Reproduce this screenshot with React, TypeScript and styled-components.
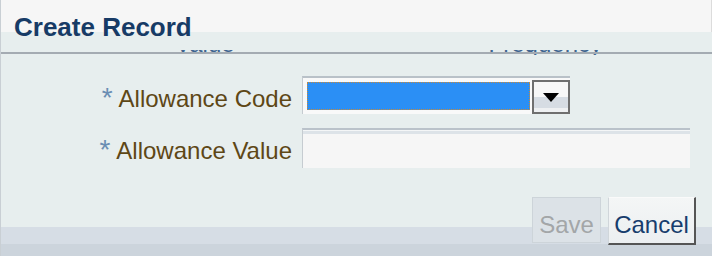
import React from 'react';
import styled, { createGlobalStyle } from 'styled-components';

const GlobalStyle = createGlobalStyle`
  body {
    margin: 0;
    font-family: 'Liberation Sans', Arial, sans-serif;
  }
`;

const Dialog = styled.div`
  width: 712px;
  height: 256px;
  box-sizing: border-box;
  display: flex;
  flex-direction: column;
  background: #e7eeee;
  border-left: 1px solid #c9cfd4;
  overflow: hidden;
`;

const Header = styled.div`
  height: 32px;
  box-sizing: border-box;
  padding: 14px 0 0 13px;
  background: #f6f6f6;
  border-right: 1px solid #dcdcdc;
`;

const Title = styled.h3`
  margin: 0;
  font-size: 26px;
  line-height: 26px;
  font-weight: bold;
  color: #173b66;
  white-space: nowrap;
`;

// the column headings of the table behind the dialog peek out round the rule
const Divider = styled.div`
  flex: none;
  margin-top: 18px;
  height: 5px;
  overflow: hidden;
  display: flex;
  flex-direction: column;
`;

const Rule = styled.div`
  flex: none;
  margin-top: -4px;
  height: 2px;
  background: #a4abb2;
`;

const HiddenHeadings = styled.div`
  flex: none;
  display: flex;
  gap: 254px;
  margin-top: -18px;
  padding-left: 174px;
  font-size: 24px;
  line-height: 24px;
  color: #3f6590;
  white-space: nowrap;
`;

const Form = styled.div`
  margin-top: 21px;
  display: grid;
  grid-template-columns: 291px auto;
  column-gap: 10px;
  row-gap: 14px;
  align-items: start;
`;

const Label = styled.label`
  padding-top: 11px;
  font-size: 24px;
  line-height: 24px;
  color: #5e4716;
  text-align: right;
  white-space: nowrap;
`;

const Star = styled.span`
  font-size: 28px;
  line-height: 0;
  color: #6a8db3;
  margin-right: 6px;
`;

const Select = styled.div`
  width: 268px;
  height: 38px;
  box-sizing: border-box;
  display: flex;
  background: #f9f9f9;
  border-top: 2px solid #b9c1c8;
  border-left: 1px solid #c5cbd0;
`;

const Chosen = styled.div`
  flex: 1;
  margin: 4px 2px 4px 4px;
  box-sizing: border-box;
  background: #2b8ff5;
  border: 1px dotted #c88a3a;
`;

const DropButton = styled.div`
  width: 38px;
  height: 34px;
  box-sizing: border-box;
  align-self: flex-end;
  display: flex;
  align-items: center;
  justify-content: center;
  border: 2px solid #6f6f6f;
  background: linear-gradient(
    to bottom,
    #f7f7f7 50%,
    #d6dce3 50%,
    #d6dce3 88%,
    #eef0f2 88%
  );
`;

const TextInput = styled.input`
  width: 388px;
  height: 40px;
  box-sizing: border-box;
  margin: 0;
  padding: 0 6px;
  border: none;
  border-top: 2px solid #bac2ca;
  border-left: 1px solid #c6ccd1;
  outline: none;
  font: inherit;
  background: linear-gradient(
    to bottom,
    #f4f6f7 1px,
    #dde3e8 1px,
    #dde3e8 4px,
    #f6f6f6 4px
  );
`;

const Footer = styled.div`
  margin-top: auto;
  height: 59px;
  box-sizing: border-box;
  display: flex;
  justify-content: flex-end;
  align-items: flex-start;
  gap: 7px;
  padding-right: 16px;
  background: linear-gradient(
    to bottom,
    transparent 30px,
    #d6dde5 30px,
    #d6dde5 47px,
    #ccd4dc 47px
  );
`;

const Button = styled.button<{ $disabled?: boolean }>`
  box-sizing: border-box;
  margin: 0;
  padding: 9px 0 0;
  font-family: inherit;
  font-size: 24px;
  line-height: 24px;
  text-align: center;
  vertical-align: top;
  cursor: ${(p) => (p.$disabled ? 'default' : 'pointer')};
  ${(p) =>
    p.$disabled
      ? `
    width: 69px;
    height: 46px;
    color: #a3a6a8;
    background: #dce2e7;
    border: 1px solid #cdd4d9;
  `
      : `
    width: 88px;
    height: 48px;
    color: #173d6d;
    background: linear-gradient(to bottom, #f4f6f6, #eceff1);
    border-top: 1px solid #fafafa;
    border-left: 1px solid #d0d6da;
    border-right: 2px solid #555;
    border-bottom: 2px solid #555;
  `}
`;

const App = () => {
  return (
    <>
      <GlobalStyle />
      <Dialog>
        <Header>
          <Title>Create Record</Title>
        </Header>
        <Divider>
          <HiddenHeadings>
            <span>Value</span>
            <span>Frequency</span>
          </HiddenHeadings>
          <Rule />
        </Divider>
        <Form>
          <Label>
            <Star>*</Star>Allowance Code
          </Label>
          <Select>
            <Chosen />
            <DropButton>
              <svg width="16" height="9" viewBox="0 0 16 9">
                <path d="M0 0H16L8 9Z" fill="#000" />
              </svg>
            </DropButton>
          </Select>
          <Label>
            <Star>*</Star>Allowance Value
          </Label>
          <TextInput />
        </Form>
        <Footer>
          <Button $disabled>Save</Button>
          <Button>Cancel</Button>
        </Footer>
      </Dialog>
    </>
  );
};

export default App;
